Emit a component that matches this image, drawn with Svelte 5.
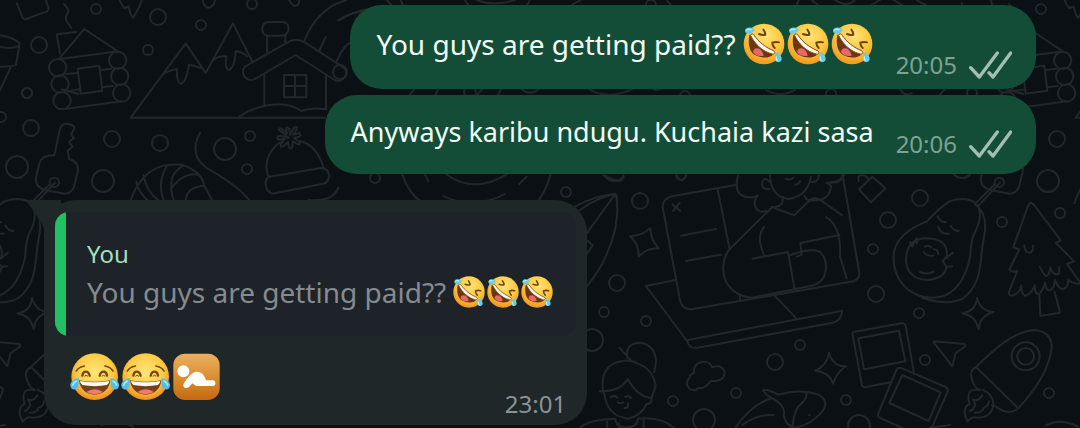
<script>
  const sent = [
    { text: 'You guys are getting paid??', laughs: 3, time: '20:05', stamp: 'low' },
    { text: 'Anyways karibu ndugu. Kuchaia kazi sasa', laughs: 0, time: '20:06', stamp: 'mid' },
  ];

  // Snow dots of the wallpaper: x, y, radius.
  const dots = [
    [96, 9, 5], [158, 17, 8], [201, 25, 5], [252, 4, 5], [39, 45, 8], [148, 50, 5], [27, 93, 5],
    [1, 117, 5], [31, 128, 8], [112, 139, 8], [160, 143, 8], [225, 149, 11], [250, 136, 5],
    [247, 169, 5], [17, 167, 11], [103, 181, 11], [340, 72, 7], [375, 178, 5], [566, 192, 5],
    [640, 201, 8], [617, 283, 8], [604, 312, 5], [646, 321, 5], [592, 340, 11], [673, 401, 5],
    [704, 420, 11], [775, 362, 8], [800, 345, 5], [736, 393, 5], [681, 175, 5], [888, 220, 8],
    [920, 198, 8], [873, 249, 5], [876, 294, 8], [919, 313, 5], [925, 360, 5], [846, 400, 5],
    [859, 426, 11], [1002, 222, 5], [1060, 213, 5], [1049, 393, 5], [831, 94, 5],
    [972, 93, 5], [651, 5, 5], [685, 96, 5], [470, 92, 6],
  ];
</script>

{#snippet rofl()}
  <svg class="emoji" viewBox="67 69 132 132" role="img" aria-label="Rolling on the floor laughing">
    <defs>
      <radialGradient id="rofl-face" cx=".55" cy=".3" r=".75">
        <stop offset="0" stop-color="#ffe376" />
        <stop offset=".55" stop-color="#fcc63a" />
        <stop offset="1" stop-color="#ee8f1c" />
      </radialGradient>
    </defs>
    <circle cx="133" cy="135" r="61" fill="url(#rofl-face)" />
    <path d="M89 108C84 134 89 160 108 169C129 179 150 177 160 167C140 158 108 134 94 107Z" fill="#6d3511" />
    <path d="M103 151C112 143 129 150 132 170C119 174 105 168 100 159Z" fill="#e5686a" />
    <path d="M93 110C91 106 98 102 102 107C117 130 138 145 163 156C168 160 165 166 159 165C130 159 107 137 93 110Z" fill="#fff8ea" stroke="#7d4918" stroke-width="3" />
    <g fill="none" stroke="#70430d" stroke-width="6" stroke-linecap="round" stroke-linejoin="round">
      <path d="M131 92Q137 99 137 107Q127 109 118 105" />
      <path d="M178 130Q168 127 158 131Q158 140 165 147" />
    </g>
    <path d="M76 94C78 84 92 84 101 88C107 91 105 96 98 100C89 108 75 105 76 94Z" fill="#66cde3" />
    <path d="M172 160C177 157 182 166 185 174C189 185 181 191 173 189C162 187 164 173 172 160Z" fill="#66cde3" />
    <path d="M81 94Q85 88 94 92M170 174Q168 182 174 184" fill="none" stroke="#b7f1f7" stroke-width="4" stroke-linecap="round" />
  </svg>
{/snippet}

{#snippet joy()}
  <svg class="emoji" viewBox="27 17 153 153" role="img" aria-label="Tears of joy">
    <defs>
      <radialGradient id="joy-face" cx=".5" cy=".4" r=".6">
        <stop offset="0" stop-color="#ffe57b" />
        <stop offset=".65" stop-color="#fccb43" />
        <stop offset="1" stop-color="#ed8a1d" />
      </radialGradient>
    </defs>
    <circle cx="104" cy="94" r="70" fill="url(#joy-face)" />
    <g fill="none" stroke="#74470f" stroke-linecap="round">
      <path d="M49 77Q56 65 73 62M135 62Q152 65 159 77" stroke-width="5" />
      <path d="M67 91Q69 79 77 79Q86 79 89 91M119 91Q122 79 131 79Q139 79 141 91" stroke-width="7" />
      <path d="M74 92Q78 87 83 92M126 92Q131 87 135 92" stroke-width="3" />
    </g>
    <path d="M57 105Q104 114 151 105C148 132 129 148 104 148C79 148 60 132 57 105Z" fill="#78401a" />
    <path d="M60 107Q104 115 148 107Q147 115 141 119Q104 126 67 119Q61 115 60 107Z" fill="#fffaf0" />
    <path d="M79 140Q104 124 129 140Q104 153 79 140Z" fill="#f07c70" />
    <path d="M57 99C46 98 30 108 31 121C32 134 48 136 54 125C57 119 56 108 57 99ZM151 99C162 98 178 108 177 121C176 134 160 136 154 125C151 119 152 108 151 99Z" fill="#56bde2" />
    <path d="M38 119Q41 111 49 107M170 119Q167 111 159 107" fill="none" stroke="#a4ebf5" stroke-width="5" stroke-linecap="round" />
  </svg>
{/snippet}

{#snippet baby()}
  <svg class="emoji" viewBox="333 17 153 153" role="img" aria-label="Baby symbol">
    <defs>
      <linearGradient id="baby-tile" x1="0" y1="0" x2="0" y2="1">
        <stop offset="0" stop-color="#e9b160" />
        <stop offset=".5" stop-color="#dc8f33" />
        <stop offset="1" stop-color="#c4690f" />
      </linearGradient>
    </defs>
    <rect x="340" y="25" width="139" height="139" rx="35" fill="url(#baby-tile)" />
    <circle cx="370" cy="78" r="18" fill="#fff" />
    <path d="M398 84C411 74 431 80 438 105H459C469 106 469 122 459 122H412C405 122 402 117 397 114L387 125C379 133 366 125 371 115C378 104 387 91 398 84Z" fill="#fff" />
  </svg>
{/snippet}

{#snippet ticks()}
  <svg class="ticks" viewBox="748 150 129 84" role="img" aria-label="Delivered">
    <path d="M753 200L779 228L833 156M808 215L820 228L873 156" />
  </svg>
{/snippet}

<main class="chat">
  <svg class="wallpaper" aria-hidden="true">
    <defs>
      <g id="doodles">
        {#each dots as [x, y, r]}
          <circle cx={x} cy={y} r={r} stroke-width="2" />
        {/each}
        <g transform="scale(.33333)">
          <path d="M50 10L68 53Q71 59 79 57L140 34Q147 30 145 22L137 0" />
          <path d="M192 12Q208 28 204 38C190 55 200 65 214 84" />
          <path d="M359 0Q363 14 373 24L386 19Q391 46 399 54Q412 35 426 0" />
          <path d="M608 0Q611 20 624 23Q642 22 645 0M867 0Q874 15 887 18Q899 13 897 0" />
          <path d="M0 106Q40 112 59 130L48 194Q45 200 0 200M0 140Q35 148 53 139M32 202L0 270" />
          <path d="M176 178L253 87L354 154L176 178M180 160L170 103L228 96" />
          <circle cx="173" cy="203" r="26" /><circle cx="180" cy="252" r="26" /><circle cx="186" cy="302" r="26" />
          <circle cx="353" cy="181" r="26" /><circle cx="359" cy="229" r="26" /><circle cx="365" cy="279" r="26" />
          <path d="M198 223L234 218M303 210L334 206M202 274L241 268M306 262L338 258M188 328L365 304" />
          <path d="M233 206L298 197L307 272L242 281Z" />
          <path d="M975 353H392L557 130L617 219L699 70L756 183M487 224Q506 211 531 207Q529 245 541 251Q558 252 567 194Q583 196 601 204M639 181Q657 166 679 169Q674 204 686 210Q704 204 707 154Q727 156 741 169" />
          <path d="M735 200L861 128Q887 110 916 128L1031 203C1051 224 1024 250 1004 240L887 165L768 235C741 253 717 218 735 200Z" />
          <path d="M793 222V316M978 228V327M801 157V107M856 127V107M801 107Q785 100 787 86Q788 67 806 66H847Q867 68 866 87Q862 106 847 107ZM713 353C756 321 849 293 903 333Q936 321 979 328" />
          <path d="M852 225H919V292H852ZM885 225V292M852 258H919" />
          <path d="M914 120Q952 25 1040 0M959 150L977 111M1010 184Q1030 134 1060 123M1015 61Q1050 34 1130 30" />
          <path d="M187 375Q196 367 216 375Q225 380 222 388L213 404L222 414L207 426L217 440L203 452L208 477Q241 488 232 520L224 553Q218 580 195 581L137 570Q104 562 108 532L118 491Q124 465 163 466L180 385Z" />
          <circle cx="163" cy="547" r="14" /><path d="M165 548L101 617M149 553L91 611" />
          <path d="M388 610Q414 536 459 510Q487 491 545 494Q603 512 612 555L642 612M409 545Q414 577 447 605M431 526Q439 576 477 602M501 497Q470 550 491 598M550 497Q514 517 514 549Q512 579 521 598M512 568Q550 515 598 524M557 600Q561 561 612 557" />
          <path d="M600 398Q562 470 629 509C677 538 719 564 747 600" />
          <path d="M805 531C786 480 819 440 841 427M898 423Q951 433 972 507M805 531L963 504Q985 506 988 528Q985 547 970 551L825 580Q806 582 800 565Q791 545 805 531Z" />
          <path d="M867 414L841 393Q830 384 844 385L861 401L858 385Q862 378 869 388L870 405L883 382Q894 376 889 389L880 404L898 399Q906 406 897 410L881 414L899 426Q901 436 890 431L878 424L877 443Q867 449 866 439L864 426L850 439Q837 444 845 430L854 416L835 419Q827 409 840 407Z" />
          <path d="M925 600Q999 607 1015 563" />
        </g>
        <g transform="translate(340) scale(.33333)">
          <path d="M0 60Q40 35 80 28M140 0L155 16M182 0L190 18M374 0Q380 8 386 16M410 0Q460 20 526 0M560 15Q570 5 568 0M695 15L722 0M980 0L992 15M210 284L230 258M286 285L300 255M410 286L435 258M474 286L487 262M540 264Q572 292 600 264M748 268Q803 300 875 268M935 264Q950 276 965 264" />
          <path d="M187 524Q206 583 250 610M248 508L265 544M315 520Q400 586 505 520M538 552L560 530M632 522Q617 580 581 620M310 588Q340 605 390 606Q450 608 494 582M790 524Q853 561 850 525M1010 524Q1022 557 1039 525" />
          <path d="M705 620Q760 588 825 581Q836 585 830 620" />
        </g>
        <g transform="translate(720) scale(.33333)">
          <path d="M230 15L236 0M275 0L295 16M345 0Q380 24 405 0M455 15L480 0M520 0L548 16M590 0L618 15M138 270Q180 295 225 270M540 266Q550 290 575 280M660 284L675 266M860 268L910 282" />
        </g>
        <g transform="translate(580 170) scale(.33333)">
          <path d="M0 120Q55 80 106 72Q118 106 105 180Q82 275 20 350M106 72L20 190M20 210L38 226L20 252" />
          <path d="M150 198Q183 199 211 175Q211 207 236 236Q202 231 176 260Q177 220 150 198Z" />
          <path d="M470 44L276 79Q243 88 249 117L300 391Q306 418 335 418L820 334Q842 325 837 303L785 0M413 58L449 238M277 103L300 122M299 99L279 123M303 197L408 177M318 273L423 254M286 330L198 348L321 513Q329 536 349 534L755 459Q783 455 787 422L320 511M580 373L647 443M480 375V388" />
          <path d="M474 16Q458 77 505 82Q526 84 533 76Q515 98 532 120Q545 130 559 122M609 80L607 99Q601 110 575 113L447 239Q417 285 438 335Q464 379 516 383L691 348Q737 339 738 292Q736 235 691 241Q660 243 629 257M575 111L643 136L692 88Q710 80 724 92L785 135M552 171Q527 202 553 257M517 266L624 246L643 354M651 260L665 254L661 219L778 195M738 141Q785 169 780 260L800 325M674 77Q678 95 704 91Q748 91 753 49Q742 34 740 40M759 36Q784 44 799 0" />
          <path d="M570 14Q572 80 625 87Q683 79 693 20M568 35Q551 17 546 40Q546 62 569 56M693 36Q715 39 717 15M617 26Q630 32 640 23M645 45Q656 43 660 34M72 16Q98 47 131 22" />
          <path d="M118 533L151 569M142 563Q135 519 180 518Q225 524 228 574Q227 592 222 607M60 664Q124 664 143 627Q173 681 215 684M69 662Q60 591 114 576Q149 565 173 581Q218 596 227 647L215 684Q216 702 200 702Q183 738 143 746Q85 737 75 682ZM0 774Q19 750 106 746Q108 774 139 772Q173 772 174 746Q243 739 282 774M82 750V774M116 760V774M191 750V774M92 681Q104 675 112 683M136 681Q147 675 153 684M113 697Q125 703 129 697M133 714Q147 716 144 700" />
          <path d="M342 609Q338 582 365 576Q389 573 397 592Q424 582 434 605Q433 638 393 632Q378 656 353 655Q346 664 330 658Q312 641 328 624Q328 613 342 609Z" />
          <path d="M706 602Q741 588 747 548Q759 591 798 588Q767 610 760 641Q746 605 706 602Z" />
          <path d="M466 774Q512 704 576 684Q553 672 549 660Q561 657 595 674Q661 655 715 674Q753 695 721 731Q682 773 628 774M576 684Q619 708 611 736Q619 770 638 768Q641 717 667 698Q682 684 679 668M487 765Q530 733 580 735M688 734V736" />
        </g>
        <g transform="translate(820 170) scale(.33333)">
          <path d="M117 58L157 20L196 55L153 97ZM116 34Q110 14 128 16Q143 18 144 29M20 38Q65 38 68 15" />
          <path d="M321 154Q354 117 388 94Q451 75 473 108Q489 137 466 184Q452 207 451 257C440 312 420 356 372 378Q313 395 263 358Q214 315 222 245Q235 187 321 154ZM466 104Q507 133 491 207C478 273 490 340 428 386Q383 408 307 384" />
          <path d="M380 259Q387 206 318 205Q257 206 258 275Q265 329 323 330Q374 325 380 291M270 216L277 230L290 204L291 220M380 259L368 274L380 291L396 289M380 264L398 248M353 139Q358 155 377 157M355 171Q360 192 386 191M392 167Q398 182 416 183M315 230Q322 225 333 231M311 246Q320 260 340 257M342 238Q355 239 354 252M300 306Q318 315 340 306" />
          <path d="M427 430Q468 424 471 383Q482 424 521 426Q481 436 476 477Q466 436 427 430Z" />
          <path d="M634 98Q628 97 622 113L580 232L598 238L568 299Q577 309 592 303L567 365Q565 380 581 376Q600 368 604 346Q603 374 617 377Q633 373 644 346Q644 373 657 372Q668 363 675 338Q678 364 690 361Q703 355 705 330Q717 359 729 357Q744 355 745 330Q762 343 783 341L741 282L762 274L708 219L722 211L643 106Z" />
          <path d="M658 374L661 438L720 428L704 366M613 226Q614 247 628 248Q641 246 639 227M660 291Q666 307 678 319Q688 316 691 292Q699 317 716 312L718 291" />
          <path d="M100 486L244 460Q254 458 257 467L281 604M97 490L126 646Q128 653 137 651L214 637M115 505L237 482L256 574L132 598ZM229 600Q236 590 246 595L377 651Q387 656 382 667L335 774M229 600L174 732Q171 740 180 744L247 774M247 615L362 667L326 753L208 699Z" />
          <path d="M342 514L433 522Q439 524 434 531L407 549L397 589L342 518Z" />
          <path d="M468 591C520 540 580 484 644 480Q693 485 695 530C690 597 641 665 596 714Q567 740 528 710L516 706M468 591L594 714M468 591Q444 604 457 632Q463 653 479 660" />
          <circle cx="617" cy="559" r="42" /><circle cx="617" cy="559" r="25" />
          <path d="M479 660Q440 653 446 690L449 702Q431 708 435 736L443 755Q454 738 474 743Q513 743 520 707Q522 674 488 659M487 676Q475 696 459 688Q474 711 450 723M507 694Q504 711 491 713Q487 728 465 728M330 773L390 765M680 765Q722 744 774 770" />
        </g>
      </g>
    </defs>
    <use href="#doodles" />
    <use href="#doodles" x="-945" />
    <use href="#doodles" x="945" />
  </svg>

  {#each sent as message}
    <article class="bubble sent">
      <p class="text" class:plain={!message.laughs}>
        <span>{message.text}</span>
        {#if message.laughs}
          <span class="laughs">
            {#each Array(message.laughs) as _}{@render rofl()}{/each}
          </span>
        {/if}
      </p>
      <footer class="meta {message.stamp}">
        <time>{message.time}</time>
        {@render ticks()}
      </footer>
    </article>
  {/each}

  <article class="bubble received">
    <svg class="tail" viewBox="0 0 34 32" aria-hidden="true">
      <path d="M34 0H2Q-1 0 1 3L14 22Q17 26 17 32H34Z" />
    </svg>
    <blockquote class="quote">
      <cite>You</cite>
      <p class="text">
        <span>You guys are getting paid??</span>
        <span class="laughs small">
          {#each Array(3) as _}{@render rofl()}{/each}
        </span>
      </p>
    </blockquote>
    <div class="reply">
      <p class="jumbo">{@render joy()}{@render joy()}{@render baby()}</p>
      <time>23:01</time>
    </div>
  </article>
</main>

<style>
  :global(body) {
    margin: 0;
    background: #0b1014;
  }

  .chat {
    position: relative;
    display: flex;
    flex-direction: column;
    gap: 6px;
    padding: 5px 44px 3px;
    overflow: hidden;
    background: #0b1014;
    font-family: 'Noto Sans', 'Open Sans', sans-serif;
    font-size: 28px;
    line-height: 38px;
  }

  .wallpaper {
    position: absolute;
    inset: 0;
    width: 100%;
    height: 100%;
    fill: none;
    stroke: #22272b;
    stroke-width: 6;
    stroke-linecap: round;
    stroke-linejoin: round;
  }

  p,
  blockquote {
    margin: 0;
  }

  .bubble {
    position: relative;
    box-sizing: border-box;
    max-width: 85%;
    border-radius: 32px;
  }

  .sent {
    display: flex;
    align-self: flex-end;
    gap: 22px;
    padding: 0 24px 0 26px;
    background: #144d37;
    color: #f2fbf5;
  }

  .text {
    display: flex;
    align-items: center;
    gap: 6px;
    white-space: nowrap;
  }

  .sent .text {
    padding: 17px 0 23px;
  }

  .sent .plain {
    padding-top: 18px;
    font-size: 27px;
  }

  .laughs {
    display: flex;
  }

  .emoji {
    display: block;
    width: 44px;
    height: 44px;
  }

  .small .emoji {
    width: 34px;
    height: 34px;
  }

  .meta {
    display: flex;
    align-items: center;
    align-self: flex-end;
    gap: 12px;
    padding-bottom: 8px;
  }

  .meta.mid {
    padding-bottom: 14px;
  }

  time {
    color: #8a9296;
    font-size: 24px;
    line-height: 32px;
  }

  .meta time {
    color: #7fa192;
  }

  .ticks {
    width: 43px;
    height: 28px;
    fill: none;
    stroke: #a1c0b1;
    stroke-width: 10;
    stroke-linecap: round;
    stroke-linejoin: round;
  }

  .received {
    align-self: flex-start;
    margin-top: 20px;
    padding: 12px 11px 3px;
    background: #202729;
  }

  .tail {
    position: absolute;
    top: 0;
    left: -17px;
    width: 34px;
    height: 32px;
    fill: #202729;
  }

  .quote {
    position: relative;
    padding: 23px 22px 25px 32px;
    border-radius: 14px;
    background: linear-gradient(to right, #21c063 11px, #1d2328 11px);
    color: #858b8f;
  }

  .quote cite {
    display: block;
    color: #a5dfbd;
    font-size: 24px;
    font-style: normal;
  }

  .reply {
    display: flex;
    align-items: flex-end;
    justify-content: space-between;
    padding: 15px 10px 2px 14px;
  }

  .jumbo {
    display: flex;
    padding-bottom: 18px;
  }

  .jumbo .emoji {
    width: 51px;
    height: 51px;
  }
</style>
